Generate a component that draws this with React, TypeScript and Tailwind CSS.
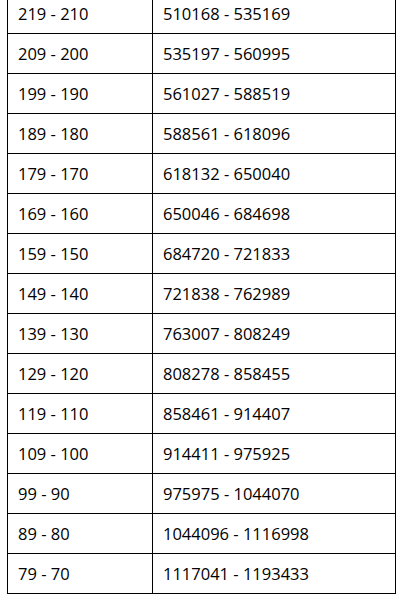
const rows: [string, string][] = [
  ["219 - 210", "510168 - 535169"],
  ["209 - 200", "535197 - 560995"],
  ["199 - 190", "561027 - 588519"],
  ["189 - 180", "588561 - 618096"],
  ["179 - 170", "618132 - 650040"],
  ["169 - 160", "650046 - 684698"],
  ["159 - 150", "684720 - 721833"],
  ["149 - 140", "721838 - 762989"],
  ["139 - 130", "763007 - 808249"],
  ["129 - 120", "808278 - 858455"],
  ["119 - 110", "858461 - 914407"],
  ["109 - 100", "914411 - 975925"],
  ["99 - 90", "975975 - 1044070"],
  ["89 - 80", "1044096 - 1116998"],
  ["79 - 70", "1117041 - 1193433"],
]

export default function App() {
  return (
    <div className="h-[595px] w-[412px] overflow-hidden bg-white">
      <div className="ml-[7px] mt-[-7px] w-[389px] border border-black font-['Open_Sans',Arial,sans-serif] text-[16.5px] text-black">
        {rows.map(([level, xp], i) => (
          <div
            key={level}
            className={
              i === rows.length - 1
                ? "grid h-[39px] grid-cols-[145px_1fr]"
                : "grid h-10 grid-cols-[145px_1fr] border-b border-black"
            }
          >
            <div className="flex items-center border-r border-black pl-[10px] pt-px">{level}</div>
            <div className="flex items-center pl-[10px] pt-px">{xp}</div>
          </div>
        ))}
      </div>
    </div>
  )
}
